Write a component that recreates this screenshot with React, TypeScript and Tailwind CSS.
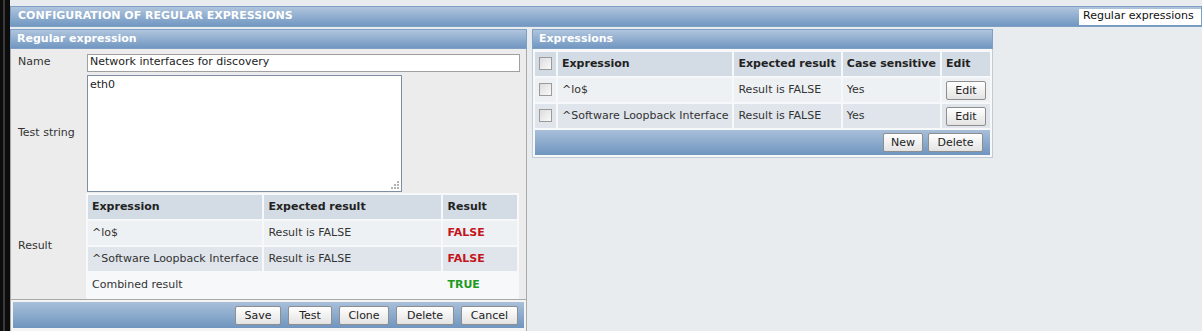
import React from 'react'

const font = { fontFamily: '"DejaVu Sans", Verdana, sans-serif' }

function Bar({ title, className = '' }: { title: string; className?: string }) {
  return (
    <div
      className={`h-[20px] flex items-center px-[6px] border border-[#7f9fc4] bg-gradient-to-b from-[#b0c5dd] to-[#7197c1] text-white font-bold text-[11px] ${className}`}
    >
      {title}
    </div>
  )
}

function Btn({ children, w }: { children: React.ReactNode; w: string }) {
  return (
    <button
      className={`h-[19px] ${w} border border-[#8e8e8e] rounded-[2px] bg-gradient-to-b from-white to-[#e3e3e3] text-[11px] text-[#222] leading-none`}
    >
      {children}
    </button>
  )
}

function Check() {
  return <span className="inline-block align-middle w-[13px] h-[13px] border border-[#9a9a9a] bg-gradient-to-br from-[#dcdcdc] to-[#fafafa]" />
}

function Grip() {
  return (
    <svg width="9" height="9" viewBox="0 0 9 9" className="absolute right-[2px] bottom-[2px]">
      {[
        [7, 1],
        [4, 4],
        [7, 4],
        [1, 7],
        [4, 7],
        [7, 7],
      ].map(([x, y], i) => (
        <rect key={i} x={x} y={y} width="2" height="2" fill="#b5b5b5" />
      ))}
    </svg>
  )
}

const th = 'h-[24px] px-[4px] text-left font-bold text-[11px] text-[#222] bg-[#d3dbe4] whitespace-nowrap'
const td = 'h-[24px] px-[4px] text-[11px] whitespace-nowrap'

export default function App() {
  const results = [
    { expr: '^lo$', expected: 'Result is FALSE' },
    { expr: '^Software Loopback Interface', expected: 'Result is FALSE' },
  ]

  return (
    <div style={font} className="w-[1202px] h-[331px] flex bg-[#e9ecef] overflow-hidden text-[11px] text-[#222]">
      <div className="w-[10px] h-full bg-[#0c0c0c] flex">
        <div className="w-[3px]" />
        <div className="w-[2px] bg-[#3a3a3a]" />
      </div>

      <div className="flex-1 flex flex-col">
        <div className="h-[6px]" />
        <div className="h-[21px] flex items-center border border-[#7f9fc4] bg-gradient-to-b from-[#b0c5dd] to-[#7197c1]">
          <span className="pl-[7px] text-white font-bold text-[11px] flex-1">CONFIGURATION OF REGULAR EXPRESSIONS</span>
          <span className="h-[16px] w-[122px] bg-white text-[#111] text-[11px] flex items-center pl-[4px]">
            Regular expressions
          </span>
        </div>

        <div className="flex gap-[5px] mt-[2px]">
          {/* left panel */}
          <div className="w-[517px] flex flex-col">
            <Bar title="Regular expression" />
            <div className="bg-[#ececec] border-l border-r border-[#a9a9a9] flex flex-col">
              <div className="grid grid-cols-[76px_1fr] pr-[6px] pt-[3px]">
                <div className="h-[21px] flex items-center pl-[7px] text-[#333]">Name</div>
                <div className="h-[21px] flex items-center">
                  <div className="h-[18px] w-full bg-white border border-[#a0a0a0] flex items-center px-[2px] text-[#222] whitespace-nowrap">
                    Network interfaces for discovery
                  </div>
                </div>

                <div className="h-[120px] flex items-center pl-[7px] text-[#333]">Test string</div>
                <div className="h-[120px] pt-[2px]">
                  <div className="relative h-[117px] w-[315px] bg-white border border-[#7f8ea3] px-[2px] pt-[1px]">
                    eth0
                    <Grip />
                  </div>
                </div>

                <div className="h-[106px] flex items-center pl-[7px] text-[#333]">Result</div>
                <div className="h-[106px]">
                  <table className="w-full border-separate border-spacing-[2px] bg-[#f6f8fa] -ml-[1px]">
                    <thead>
                      <tr>
                        <th className={`${th} w-[172px]`}>Expression</th>
                        <th className={`${th} w-[177px]`}>Expected result</th>
                        <th className={th}>Result</th>
                      </tr>
                    </thead>
                    <tbody>
                      {results.map((r, i) => (
                        <tr key={r.expr} className={i % 2 ? 'bg-[#dfe5eb] text-[#333]' : 'bg-[#eef1f4] text-[#333]'}>
                          <td className={td}>{r.expr}</td>
                          <td className={td}>{r.expected}</td>
                          <td className={`${td} font-bold text-[#c4151c]`}>FALSE</td>
                        </tr>
                      ))}
                      <tr className="bg-[#f6f8fa] text-[#333]">
                        <td className={td}>Combined result</td>
                        <td className={td}></td>
                        <td className={`${td} font-bold text-[#1f9a1f]`}>TRUE</td>
                      </tr>
                    </tbody>
                  </table>
                </div>
              </div>
              <div className="border-t border-[#a9a9a9] bg-[#f4f4f4] px-[2px] pt-[2px] pb-[3px]">
                <div className="h-[26px] flex items-center justify-end gap-[7px] pr-[6px] bg-gradient-to-b from-[#a8bfd9] to-[#6f95bf]">
                  <Btn w="w-[46px]">Save</Btn>
                  <Btn w="w-[44px]">Test</Btn>
                  <Btn w="w-[50px]">Clone</Btn>
                  <Btn w="w-[58px]">Delete</Btn>
                  <Btn w="w-[57px]">Cancel</Btn>
                </div>
              </div>
            </div>
          </div>

          {/* right panel */}
          <div className="w-[461px] flex flex-col self-start">
            <Bar title="Expressions" />
            <div className="bg-[#f6f8fa] border-l border-r border-b border-[#c2cad3] pt-[1px]">
              <table className="w-full border-separate border-spacing-[2px]">
                <thead>
                  <tr>
                    <th className={`${th} w-[21px] px-[3px]`}>
                      <Check />
                    </th>
                    <th className={`${th} w-[172px]`}>Expression</th>
                    <th className={`${th} w-[107px] px-[3px]`}>Expected result</th>
                    <th className={`${th} w-[97px] px-[3px]`}>Case sensitive</th>
                    <th className={th}>Edit</th>
                  </tr>
                </thead>
                <tbody>
                  {results.map((r, i) => (
                    <tr key={r.expr} className={i % 2 ? 'bg-[#dfe5eb] text-[#333]' : 'bg-[#eef1f4] text-[#333]'}>
                      <td className={`${td} px-[3px]`}>
                        <Check />
                      </td>
                      <td className={td}>{r.expr}</td>
                      <td className={`${td} px-[3px]`}>{r.expected}</td>
                      <td className={`${td} px-[3px]`}>Yes</td>
                      <td className={`${td} text-center`}>
                        <Btn w="w-[40px]">Edit</Btn>
                      </td>
                    </tr>
                  ))}
                </tbody>
              </table>
              <div className="mx-[2px] mb-[2px] h-[25px] flex items-center justify-end gap-[5px] pr-[7px] bg-gradient-to-b from-[#a8bfd9] to-[#6f95bf]">
                <Btn w="w-[40px]">New</Btn>
                <Btn w="w-[55px]">Delete</Btn>
              </div>
            </div>
          </div>
        </div>
      </div>
    </div>
  )
}
